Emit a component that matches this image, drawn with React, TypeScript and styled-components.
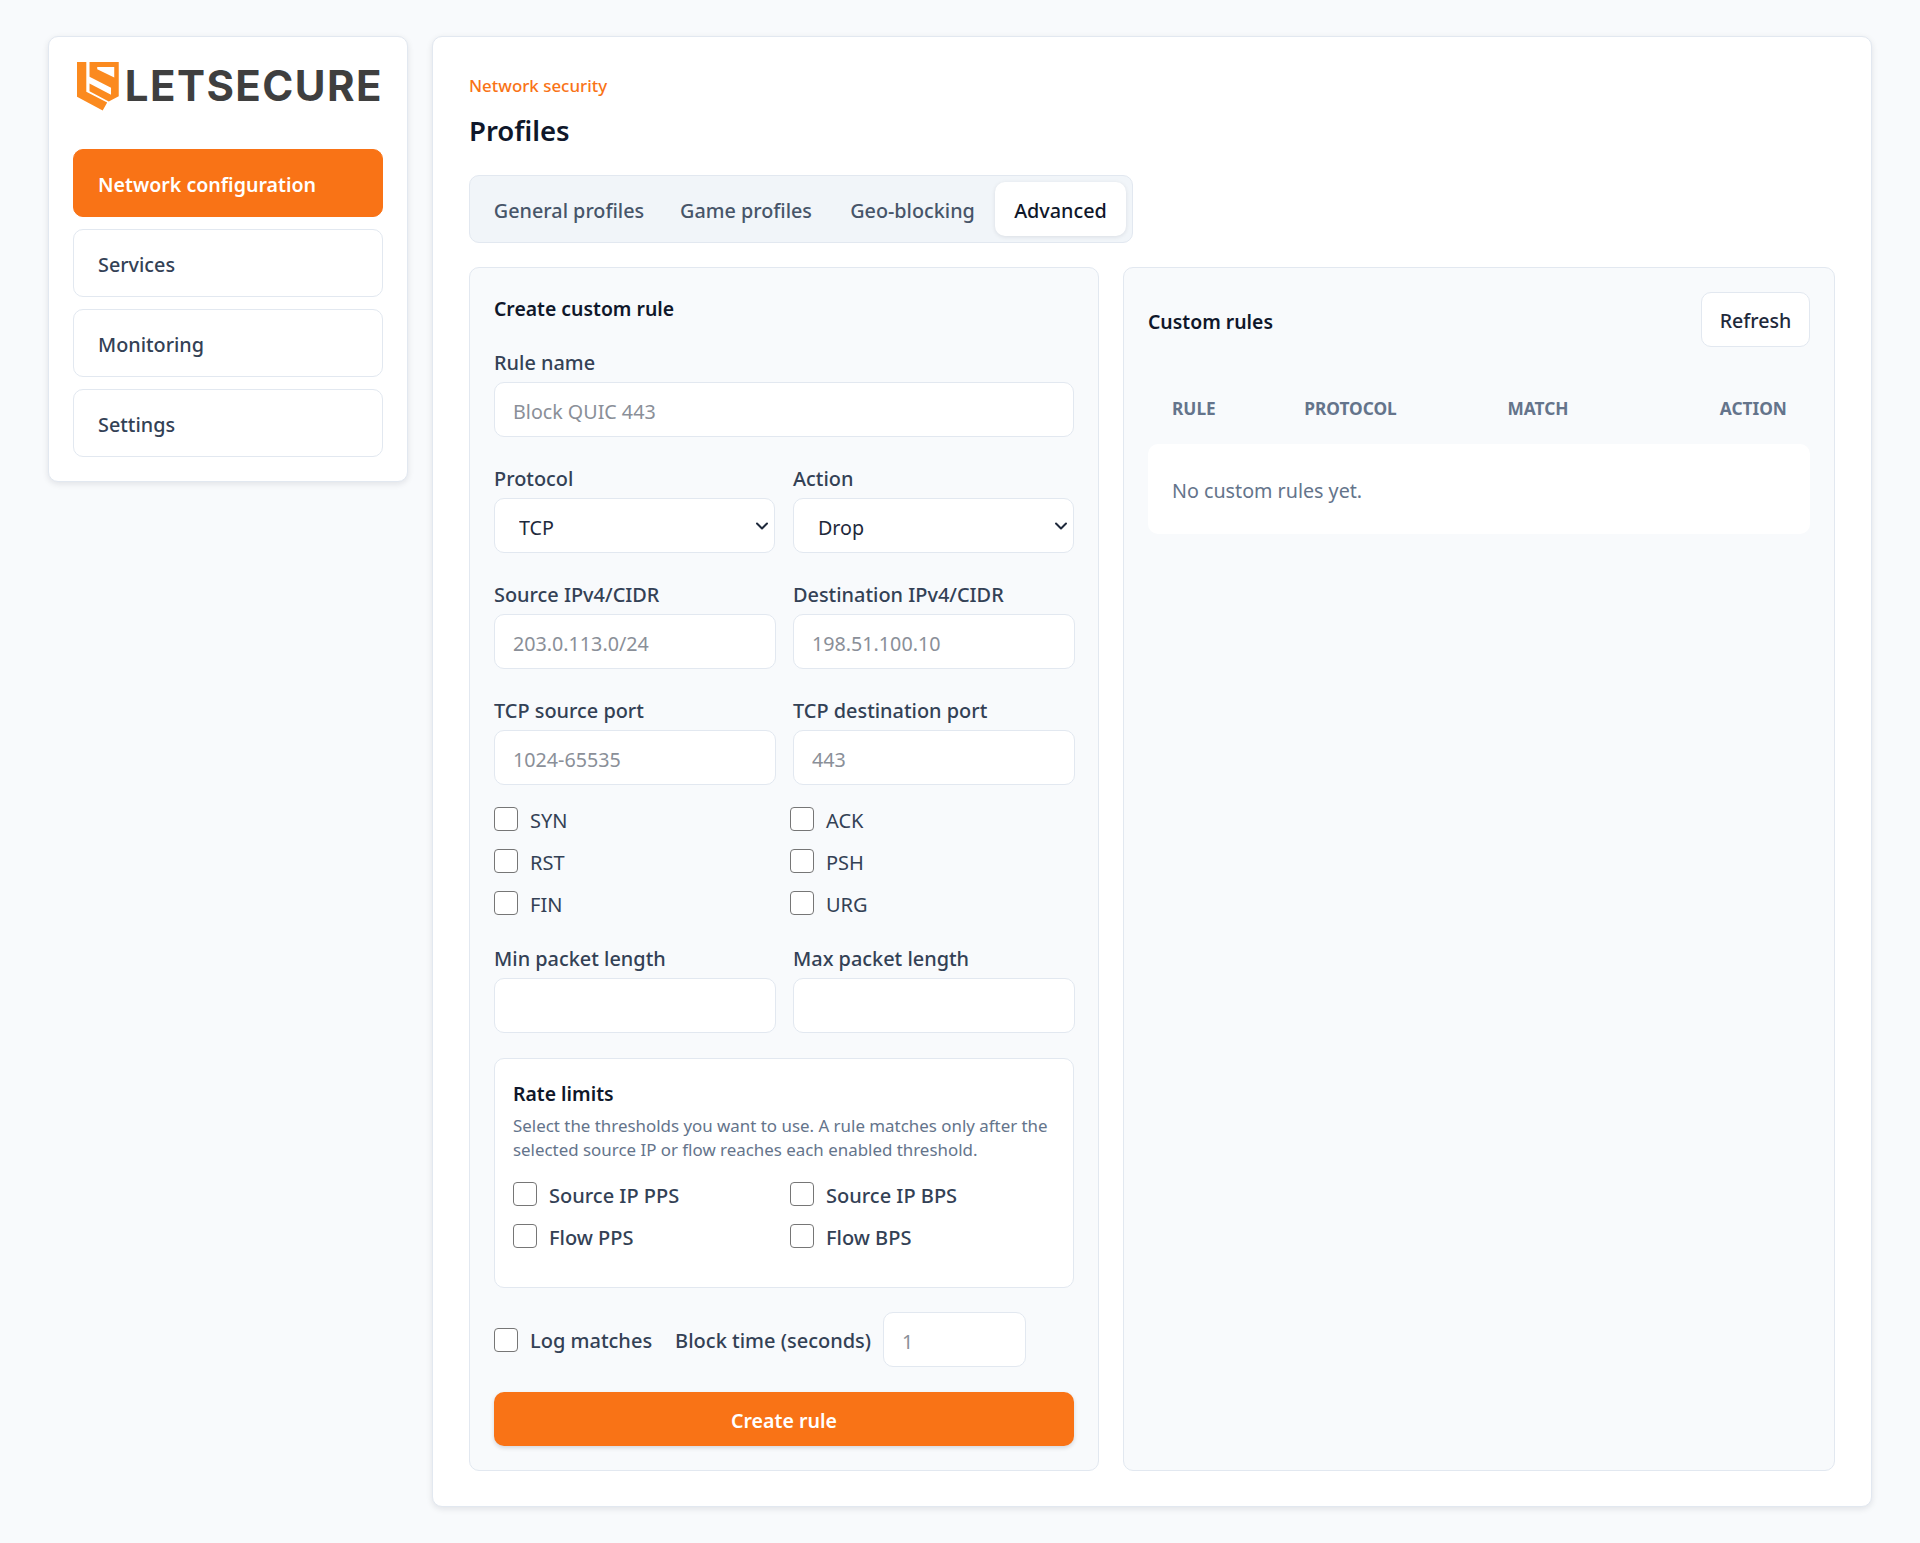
import React from "react";
import styled, { createGlobalStyle } from "styled-components";
import { ChevronDown } from "lucide-react";

const Global = createGlobalStyle`
  html, body { margin: 0; padding: 0; background: #f8fafc; }
  body { font-family: "Noto Sans", "Open Sans", sans-serif; font-size: 19.6px; color: #0f172a; }
  * { box-sizing: border-box; }
`;

const Page = styled.div`
  display: flex; align-items: flex-start; gap: 24px;
  padding: 36px 48px; min-height: 1543px;
`;
const Sidebar = styled.aside`
  width: 360px; flex: none; padding: 24px; background: #fff;
  border: 1px solid #e2e8f0; border-radius: 10px;
  box-shadow: 0 2px 6px rgba(15, 23, 42, 0.1);
`;
const Logo = styled.div`
  display: flex; align-items: center; height: 51px; margin: 0 0 37px 4px; gap: 6px;
`;
const LogoText = styled.span`
  font-family: "Inter", sans-serif; font-weight: 700; font-size: 42px; line-height: 49px; padding-bottom: 2px;
  color: #3f3f3f; letter-spacing: 1.45px; white-space: nowrap;
`;
const Nav = styled.nav`display: flex; flex-direction: column; gap: 12px;`;
const NavItem = styled.a<{ $active?: boolean }>`
  display: flex; align-items: center; height: 68px; padding: 2px 24px 0;
  border-radius: 10px; font-size: ${(p) => (p.$active ? 19.6 : 19.8)}px;
  border: 1px solid ${(p) => (p.$active ? "#f97316" : "#e2e8f0")};
  background: ${(p) => (p.$active ? "#f97316" : "#fff")};
  color: ${(p) => (p.$active ? "#fff" : "#334155")};
  font-weight: ${(p) => (p.$active ? 600 : 500)};
`;
const Main = styled.main`
  flex: 1; min-width: 0; padding: 36px; background: #fff;
  border: 1px solid #e2e8f0; border-radius: 10px;
  box-shadow: 0 2px 6px rgba(15, 23, 42, 0.1);
`;
const Eyebrow = styled.div`
  font-size: 16.9px; line-height: 26px; font-weight: 500; color: #f97316; margin-bottom: 6px;
`;
const Title = styled.h1`
  margin: 0 0 18px; font-size: 27.5px; line-height: 52px; font-weight: 600; color: #0f172a;
`;
const Tabs = styled.div`
  display: inline-flex; height: 68px; padding: 6px; background: #f1f5f9;
  border: 1px solid #e2e8f0; border-radius: 10px; vertical-align: top;
`;
const TabsWrap = styled.div`height: 68px; margin-bottom: 24px;`;
const Tab = styled.button<{ $active?: boolean; $w: number }>`
  width: ${(p) => p.$w}px; font: inherit; font-size: 19.8px; font-weight: 500; height: 54px; padding: 2px 0 0; border: 0;
  border-radius: 10px; white-space: nowrap; text-align: center;
  background: ${(p) => (p.$active ? "#fff" : "transparent")};
  color: ${(p) => (p.$active ? "#0f172a" : "#475569")};
  box-shadow: ${(p) => (p.$active ? "0 1px 4px rgba(15,23,42,.1)" : "none")};
`;
const Columns = styled.div`
  display: grid; grid-template-columns: 630fr 712fr; gap: 24px; height: 1203px;
`;
const Card = styled.section`
  background: #f8fafc; border: 1px solid #e2e8f0; border-radius: 10px; padding: 24px;
`;
const CardTitle = styled.h2`
  margin: 0; font-size: 19.4px; line-height: 33px; font-weight: 600; color: #0f172a;
`;
const HeadTitle = styled(CardTitle)`padding-top: 3px;`;
const Row = styled.div<{ $mt: number }>`
  display: grid; grid-template-columns: 1fr 1fr; column-gap: 18px; margin-top: ${(p) => p.$mt}px;
`;
const Single = styled.div<{ $mt: number }>`margin-top: ${(p) => p.$mt}px;`;
const Field = styled.label`display: block;`;
const FieldLabel = styled.span`
  display: block; font-size: 19.9px; line-height: 25px; font-weight: 500; color: #334155; margin-bottom: 7px;
`;
const Input = styled.input`
  display: block; width: 100%; height: 55px; padding: 3px 18px 0; font: inherit; font-size: 19.7px;
  color: #1e293b; background: #fff; border: 1px solid #e2e8f0; border-radius: 10px; outline: 0;
  &::placeholder { color: #8a8f98; opacity: 1; }
`;
const RowInput = styled(Input)`width: calc(100% + 1px);`;
const ShortInput = styled(Input)`width: 143px; flex: none;`;
const SelectWrap = styled.div`position: relative;`;
const Select = styled.select`
  display: block; width: 100%; height: 55px; padding: 3px 40px 0 24px; font: inherit; font-size: 19.7px;
  color: #1e293b; background: #fff; border: 1px solid #e2e8f0; border-radius: 10px; outline: 0;
  appearance: none;
`;
const Chevron = styled(ChevronDown)`
  position: absolute; right: 3px; top: 18px; width: 20px; height: 20px; color: #1e293b; pointer-events: none;
`;
const CheckGrid = styled.div<{ $mt: number }>`
  display: grid; grid-template-columns: 1fr 1fr; column-gap: 12px; row-gap: 18px; margin-top: ${(p) => p.$mt}px;
`;
const CheckLabel = styled.label<{ $strong?: boolean }>`
  display: flex; align-items: center; gap: 12px; height: 24px; font-size: 20px; color: #334155;
  font-weight: ${(p) => (p.$strong ? 500 : 400)}; white-space: nowrap;
`;
const CheckText = styled.span`padding-top: 2px;`;
const Box = styled.input.attrs({ type: "checkbox" })`
  appearance: none; flex: none; width: 24px; height: 24px; margin: 0; background: #fff;
  border: 1.5px solid #767676; border-radius: 4px;
`;
const RateBox = styled.div`
  margin-top: 25px; height: 230px; padding: 21px 18px 0; background: #fff;
  border: 1px solid #e2e8f0; border-radius: 10px;
`;
const RateTitle = styled.div`font-size: 19.4px; line-height: 27px; font-weight: 600; color: #0f172a;`;
const RateText = styled.p`margin: 7px 0 0; font-size: 16.9px; line-height: 24px; color: #64748b;`;
const LogRow = styled.div`display: flex; align-items: center; margin-top: 24px; height: 55px;`;
const BlockLabel = styled.span`
  margin: 0 12px 0 23px; padding-top: 2px; font-size: 20px; font-weight: 500; color: #334155; white-space: nowrap;
`;
const Primary = styled.button`
  display: block; width: 100%; height: 54px; margin-top: 25px; padding: 2px 0 0; font: inherit; font-size: 19.6px; font-weight: 600;
  color: #fff; background: #f97316; border: 0; border-radius: 10px;
  box-shadow: 0 2px 4px rgba(15, 23, 42, 0.15);
`;
const CardHead = styled.div`display: flex; align-items: center; justify-content: space-between;`;
const Refresh = styled.button`
  width: 109px; height: 55px; padding: 2px 0 0; font: inherit; font-size: 19.6px; font-weight: 500; color: #1e293b;
  background: #fff; border: 1px solid #e2e8f0; border-radius: 10px;
`;
const Table = styled.table`
  width: 100%; margin-top: 25px; border-collapse: separate; border-spacing: 0; table-layout: fixed;
`;
const Th = styled.th<{ $w: number }>`
  width: ${(p) => p.$w}px; height: 72px; padding: 0 0 0 24px; text-align: left;
  font-size: 17.3px; font-weight: 700; text-transform: uppercase; color: #64748b;
`;
const EmptyCell = styled.td`
  height: 90px; padding: 2px 24px 0; background: #fff; border-radius: 10px;
  font-size: 19.7px; color: #64748b;
`;

const Shield = () => (
  <svg width="44" height="51" viewBox="22 20 130 152" aria-hidden="true">
    <path fill="#fb8a1f" d="M22 20H51V112L116 146L102 171L22 128Z" />
    <path
      fill="#fb8a1f"
      fillRule="evenodd"
      d="M61 20H152V126L121 143L61 111V87L128 122V100L61 66ZM85 35V42L138 68V35Z"
    />
  </svg>
);

const flags = ["SYN", "ACK", "RST", "PSH", "FIN", "URG"];
const rates = ["Source IP PPS", "Source IP BPS", "Flow PPS", "Flow BPS"];

export default function App() {
  return (
    <>
      <Global />
      <Page>
        <Sidebar>
          <Logo>
            <Shield />
            <LogoText>LETSECURE</LogoText>
          </Logo>
          <Nav>
            <NavItem $active>Network configuration</NavItem>
            <NavItem>Services</NavItem>
            <NavItem>Monitoring</NavItem>
            <NavItem>Settings</NavItem>
          </Nav>
        </Sidebar>
        <Main>
          <Eyebrow>Network security</Eyebrow>
          <Title>Profiles</Title>
          <TabsWrap>
            <Tabs>
              <Tab $w={186}>General profiles</Tab>
              <Tab $w={168}>Game profiles</Tab>
              <Tab $w={165}>Geo-blocking</Tab>
              <Tab $w={131} $active>Advanced</Tab>
            </Tabs>
          </TabsWrap>
          <Columns>
            <Card>
              <CardTitle>Create custom rule</CardTitle>
              <Single $mt={25}>
                <Field>
                  <FieldLabel>Rule name</FieldLabel>
                  <Input placeholder="Block QUIC 443" />
                </Field>
              </Single>
              <Row $mt={29}>
                <Field>
                  <FieldLabel>Protocol</FieldLabel>
                  <SelectWrap>
                    <Select defaultValue="TCP">
                      <option>TCP</option>
                      <option>UDP</option>
                    </Select>
                    <Chevron strokeWidth={2.4} />
                  </SelectWrap>
                </Field>
                <Field>
                  <FieldLabel>Action</FieldLabel>
                  <SelectWrap>
                    <Select defaultValue="Drop">
                      <option>Drop</option>
                      <option>Accept</option>
                    </Select>
                    <Chevron strokeWidth={2.4} />
                  </SelectWrap>
                </Field>
              </Row>
              <Row $mt={29}>
                <Field>
                  <FieldLabel>Source IPv4/CIDR</FieldLabel>
                  <RowInput placeholder="203.0.113.0/24" />
                </Field>
                <Field>
                  <FieldLabel>Destination IPv4/CIDR</FieldLabel>
                  <RowInput placeholder="198.51.100.10" />
                </Field>
              </Row>
              <Row $mt={29}>
                <Field>
                  <FieldLabel>TCP source port</FieldLabel>
                  <RowInput placeholder="1024-65535" />
                </Field>
                <Field>
                  <FieldLabel>TCP destination port</FieldLabel>
                  <RowInput placeholder="443" />
                </Field>
              </Row>
              <CheckGrid $mt={22}>
                {flags.map((f) => (
                  <CheckLabel key={f}>
                    <Box />
                    <CheckText>{f}</CheckText>
                  </CheckLabel>
                ))}
              </CheckGrid>
              <Row $mt={31}>
                <Field>
                  <FieldLabel>Min packet length</FieldLabel>
                  <RowInput />
                </Field>
                <Field>
                  <FieldLabel>Max packet length</FieldLabel>
                  <RowInput />
                </Field>
              </Row>
              <RateBox>
                <RateTitle>Rate limits</RateTitle>
                <RateText>
                  Select the thresholds you want to use. A rule matches only after the selected source IP or flow
                  reaches each enabled threshold.
                </RateText>
                <CheckGrid $mt={20}>
                  {rates.map((r) => (
                    <CheckLabel key={r} $strong>
                      <Box />
                      <CheckText>{r}</CheckText>
                    </CheckLabel>
                  ))}
                </CheckGrid>
              </RateBox>
              <LogRow>
                <CheckLabel $strong>
                  <Box />
                  <CheckText>Log matches</CheckText>
                </CheckLabel>
                <BlockLabel>Block time (seconds)</BlockLabel>
                <ShortInput placeholder="1" />
              </LogRow>
              <Primary>Create rule</Primary>
            </Card>
            <Card>
              <CardHead>
                <HeadTitle>Custom rules</HeadTitle>
                <Refresh>Refresh</Refresh>
              </CardHead>
              <Table>
                <thead>
                  <tr>
                    <Th $w={132}>Rule</Th>
                    <Th $w={203}>Protocol</Th>
                    <Th $w={212}>Match</Th>
                    <Th $w={114}>Action</Th>
                  </tr>
                </thead>
                <tbody>
                  <tr>
                    <EmptyCell colSpan={4}>No custom rules yet.</EmptyCell>
                  </tr>
                </tbody>
              </Table>
            </Card>
          </Columns>
        </Main>
      </Page>
    </>
  );
}
